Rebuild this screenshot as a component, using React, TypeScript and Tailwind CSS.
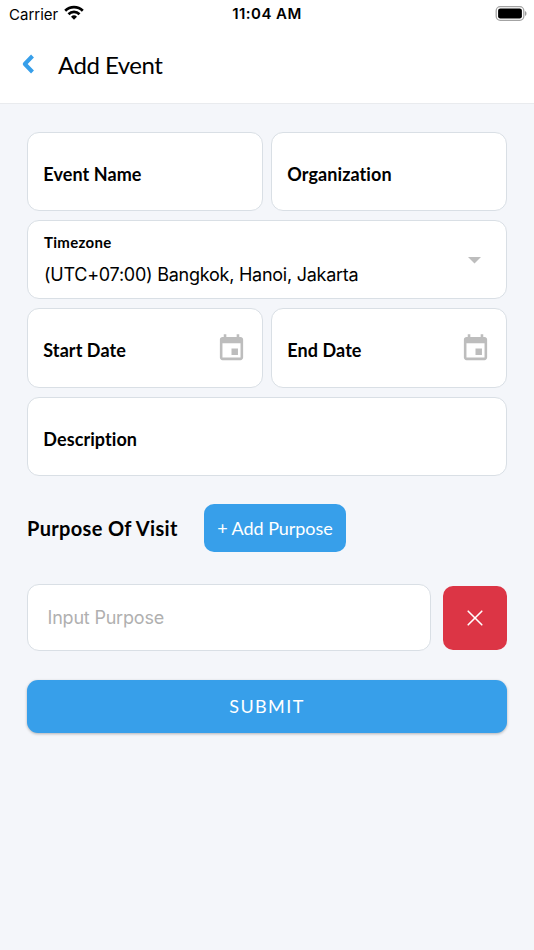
import type { ReactNode } from "react";
import clsx from "clsx";

function StatusBar() {
  return (
    <div className="flex h-7 items-center justify-between pl-[9px] pr-[7px] font-['Inter',sans-serif] text-black">
      <div className="flex w-[200px] items-center gap-[6px]">
        <span className="pt-[1px] text-[15px] leading-7">Carrier</span>
        <svg width="20" height="15" viewBox="0 0 20 15" className="-mt-[3px]">
          <g fill="none" stroke="#000" strokeWidth="2.7">
            <path d="M1.2 5.7a12.6 12.6 0 0 1 17.6 0" />
            <path d="M4.5 9.2a7.9 7.9 0 0 1 11 0" />
          </g>
          <path d="M10 14.8l-3-3a4.3 4.3 0 0 1 6 0z" fill="#000" />
        </svg>
      </div>
      <span className="-ml-[2px] text-[15px] font-semibold leading-7 tracking-[0.45px]">11:04 AM</span>
      <div className="flex w-[200px] justify-end">
        <svg width="32" height="15" viewBox="0 0 32 15" className="-mt-[2px]">
          <rect x="1.2" y="0.7" width="27.6" height="13.6" rx="4" fill="none" stroke="#a3a3a3" strokeWidth="1.3" />
          <rect x="3.1" y="2.6" width="23.8" height="9.8" rx="2.2" fill="#000" />
          <path d="M30.1 5v5c1.8-.8 1.8-4.2 0-5z" fill="#8f8f8f" />
        </svg>
      </div>
    </div>
  );
}

function CalendarIcon() {
  return (
    <svg width="31" height="31" viewBox="0 0 24 24" fill="#bdbdbd" className="-mt-[3px]">
      <path d="M17 12h-5v5h5v-5zM16 1v2H8V1H6v2H5c-1.110 0-1.990.9-1.990 2L3 19c0 1.100.89 2 2 2h14c1.100 0 2-.9 2-2V5c0-1.100-.9-2-2-2h-1V1h-2zm3 18H5V8h14v11z" />
    </svg>
  );
}

function Field({ label, icon, className }: { label: string; icon?: ReactNode; className?: string }) {
  return (
    <div
      className={clsx(
        "flex items-center justify-between rounded-xl border border-[#d9dfe5] bg-white pl-[15.3px] pr-[15px]",
        className,
      )}
    >
      <span className="text-[18px] font-bold leading-6 tracking-[0.08px]">{label}</span>
      {icon}
    </div>
  );
}

export default function App() {
  return (
    <div className="flex h-[950px] w-full flex-col bg-[#f4f6fa] font-['Lato',sans-serif] text-black [font-variant-ligatures:none]">
      <header className="h-[104px] border-b border-[#e9ebee] bg-white">
        <StatusBar />
        <div className="flex h-[73px] items-center pl-[22px]">
          <button aria-label="Back" className="-mt-[1px]">
            <svg width="13" height="20" viewBox="0 0 13 20">
              <path
                d="M10.5 2L2.800 10l7.700 8"
                fill="none"
                stroke="#379fea"
                strokeWidth="4"
                strokeLinejoin="round"
              />
            </svg>
          </button>
          <h1 className="pl-[23px] pt-[1px] text-2xl leading-8 tracking-[-0.5px]">Add Event</h1>
        </div>
      </header>

      <main className="flex flex-col px-[27px] pt-7">
        <div className="flex flex-col gap-[9px]">
          <div className="grid grid-cols-2 gap-2">
            <Field label="Event Name" className="h-[79px] pt-[5px]" />
            <Field label="Organization" className="h-[79px] pt-[5px]" />
          </div>

          <div className="flex h-[79px] items-center justify-between rounded-xl border border-[#d9dfe5] bg-white pl-4 pr-[25px]">
            <div className="flex flex-col">
              <span className="text-[15px] font-bold leading-5 tracking-[0.3px]">Timezone</span>
              <span className="pb-[1px] pt-[11px] font-['Inter',sans-serif] text-[18px] leading-6 tracking-[-0.25px]">
                (UTC+07:00) Bangkok, Hanoi, Jakarta
              </span>
            </div>
            <svg width="13" height="7" viewBox="0 0 13 7" fill="#bdbdbd" className="mt-[2px]">
              <path d="M0 0h13L6.5 6.5z" />
            </svg>
          </div>

          <div className="grid grid-cols-2 gap-2">
            <Field label="Start Date" icon={<CalendarIcon />} className="h-20 pt-[3px]" />
            <Field label="End Date" icon={<CalendarIcon />} className="h-20 pt-[3px]" />
          </div>

          <Field label="Description" className="h-[79px] pt-[5px]" />
        </div>

        <div className="mt-7 flex items-center">
          <h2 className="w-[177px] whitespace-nowrap text-xl font-bold tracking-[0.33px]">Purpose Of Visit</h2>
          <button className="h-12 w-[142px] rounded-[10px] bg-[#379fea] pt-[1px] text-[18px] tracking-[-0.05px] text-white">
            + Add Purpose
          </button>
        </div>

        <div className="mt-8 flex items-center justify-between">
          <input
            type="text"
            placeholder="Input Purpose"
            className="h-[67px] w-[404px] rounded-xl border border-[#d9dfe5] bg-white px-[19.5px] font-['Inter',sans-serif] text-[18px] tracking-[-0.2px] placeholder:text-[#b0b0b0]"
          />
          <button
            className="flex h-16 w-16 items-center justify-center rounded-[10px] bg-[#dc3545]"
            aria-label="Remove"
          >
            <svg width="16" height="16" viewBox="0 0 16 16" stroke="#fff" strokeWidth="1.6" strokeLinecap="round">
              <path d="M1.2 1.2l13.6 13.6M14.8 1.2L1.2 14.8" />
            </svg>
          </button>
        </div>

        <button className="mt-[29px] h-[53px] rounded-[11px] bg-[#379fea] text-[18px] tracking-[1.4px] text-white shadow-[0_1px_3px_rgba(0,0,0,0.28)]">
          SUBMIT
        </button>
      </main>
    </div>
  );
}
